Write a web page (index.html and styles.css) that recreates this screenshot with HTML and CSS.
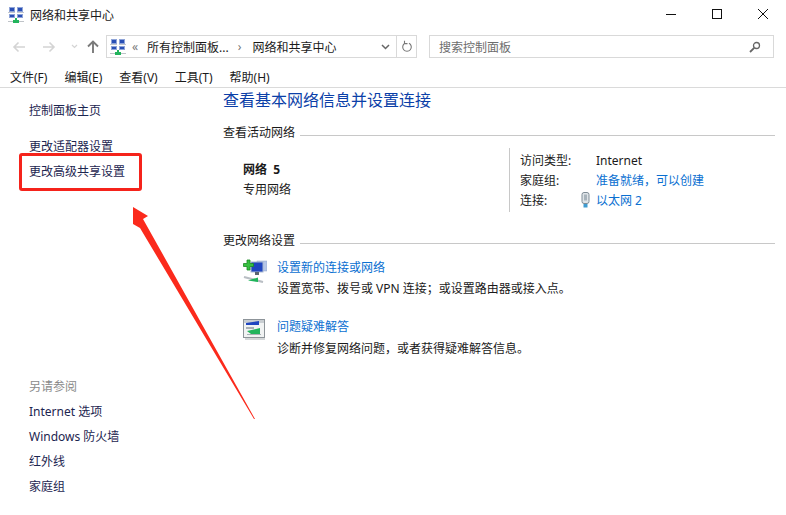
FILE: index.html
```html
<!DOCTYPE html>
<html lang="zh-CN">

<head>
    <meta charset="UTF-8">
    <title>网络和共享中心</title>
    <link rel="stylesheet" href="styles.css">
</head>

<body>
    <svg width="0" height="0" class="defs">
        <symbol id="net" viewBox="0 0 16 16">
            <rect x="1" y="0" width="6" height="5" fill="#8fa4d8" />
            <rect x="9" y="0" width="6" height="5" fill="#8fa4d8" />
            <rect x="2" y="1" width="4" height="3" fill="#2a50b5" />
            <rect x="10" y="1" width="4" height="3" fill="#2a50b5" />
            <rect x="1" y="7" width="6" height="4" fill="#8fa4d8" />
            <rect x="9" y="7" width="6" height="4" fill="#8fa4d8" />
            <rect x="2" y="8" width="4" height="2" fill="#2a50b5" />
            <rect x="10" y="8" width="4" height="2" fill="#2a50b5" />
            <rect x="0" y="5" width="7" height="1" fill="#c3c7cd" />
            <rect x="9" y="5" width="7" height="1" fill="#c3c7cd" />
            <rect x="0" y="14" width="16" height="1" fill="#bfc3c8" />
            <rect x="7" y="11" width="2" height="2" fill="#22b45c" />
            <rect x="5" y="13" width="6" height="3" fill="#22b45c" />
        </symbol>
    </svg>

    <div class="window">
        <div class="titlebar">
            <svg class="icon16"><use href="#net" /></svg>
            <span class="title">网络和共享中心</span>
            <div class="winbtns">
                <svg width="12" height="12" viewBox="0 0 12 12"><path d="M1 5.500h10" stroke="#111" fill="none" /></svg>
                <svg width="12" height="12" viewBox="0 0 12 12"><rect x="1.500" y="0.500" width="9" height="9" stroke="#111" fill="none" /></svg>
                <svg width="12" height="12" viewBox="0 0 12 12"><path d="M1 0l10 10M11 0l-10 10" stroke="#111" fill="none" /></svg>
            </div>
        </div>

        <div class="navbar">
            <div class="navbtns">
                <svg width="14" height="12" viewBox="0 0 14 12"><path d="M13 6H2M6.500 1.500L2 6l4.500 4.500" stroke="#d4d4d4" stroke-width="1.600" fill="none" /></svg>
                <svg width="14" height="12" viewBox="0 0 14 12"><path d="M1 6h11M7.500 1.500L12 6l-4.500 4.500" stroke="#d4d4d4" stroke-width="1.600" fill="none" /></svg>
                <svg width="7" height="5" viewBox="0 0 7 5"><path d="M1 1l2.500 2.500L6 1" stroke="#d4d4d4" stroke-width="1.200" fill="none" /></svg>
                <svg width="12" height="13" viewBox="0 0 12 13"><path d="M6 13V2M1 6.500L6 1.500l5 5" stroke="#7a7a7a" stroke-width="1.900" fill="none" /></svg>
            </div>
            <div class="address">
                <svg class="icon16"><use href="#net" /></svg>
                <span class="crumb-mark">«</span>
                <span>所有控制面板...</span>
                <span class="crumb-sep">›</span>
                <span>网络和共享中心</span>
                <svg class="addr-drop" width="9" height="6" viewBox="0 0 9 6"><path d="M1 1l3.500 3.500L8 1" stroke="#666" stroke-width="1.500" fill="none" /></svg>
                <div class="refresh">
                    <svg width="12" height="13" viewBox="0 0 12 13"><path d="M4 3.200A4.300 4.300 0 1 0 8 3.200M3.500 0.800V3.600H6.500" stroke="#777" stroke-width="1.100" fill="none" /></svg>
                </div>
            </div>
            <div class="search">
                <span>搜索控制面板</span>
                <svg width="12" height="12" viewBox="0 0 12 12"><circle cx="7.500" cy="4.500" r="3" stroke="#666" stroke-width="1.300" fill="none" /><path d="M5.200 6.800L1 11" stroke="#666" stroke-width="1.800" /></svg>
            </div>
        </div>

        <div class="menubar">
            <span>文件(F)</span>
            <span>编辑(E)</span>
            <span>查看(V)</span>
            <span>工具(T)</span>
            <span>帮助(H)</span>
        </div>

        <div class="content">
            <div class="sidebar">
                <a class="home">控制面板主页</a>
                <a class="first">更改适配器设置</a>
                <a>更改高级共享设置</a>
                <div class="seealso">另请参阅</div>
                <a>Internet 选项</a>
                <a>Windows 防火墙</a>
                <a>红外线</a>
                <a>家庭组</a>
            </div>

            <div class="main">
                <h1>查看基本网络信息并设置连接</h1>

                <div class="section-head"><span>查看活动网络</span><i></i></div>
                <div class="active-net">
                    <div class="net-name">
                        <b>网络&nbsp;&nbsp;5</b>
                        <span>专用网络</span>
                    </div>
                    <div class="net-info">
                        <div class="info-row"><span class="label">访问类型:</span><span>Internet</span></div>
                        <div class="info-row"><span class="label">家庭组:</span><a>准备就绪<span class="mid">，</span>可以创建</a></div>
                        <div class="info-row">
                            <span class="label">连接:</span>
                            <svg class="plug" width="9" height="16" viewBox="0 0 9 16">
                                <rect x="1" y="0.500" width="7" height="11" rx="2" fill="#dfe4e8" stroke="#7f8c96" />
                                <rect x="3" y="2.500" width="3" height="6" fill="#a9b4bc" />
                                <rect x="2.500" y="12" width="4" height="3.500" fill="#3f9bd0" />
                            </svg>
                            <a>以太网 2</a>
                        </div>
                    </div>
                </div>

                <div class="section-head second"><span>更改网络设置</span><i></i></div>

                <div class="task task-new">
                    <svg class="task-icon" width="24" height="24" viewBox="0 0 24 24">
                        <rect x="14" y="2" width="10" height="10" fill="#b5c6e8" stroke="#8ea3c8" stroke-width="0.500" />
                        <rect x="8" y="3" width="12" height="10" fill="#1f45c0" stroke="#a9b7d0" />
                        <rect x="12" y="13" width="4" height="3" fill="#5a6470" />
                        <path d="M4 1h3v3.500h3.500v3H7V11H4V7.500H0.500v-3H4z" fill="#38c040" stroke="#1a8a24" stroke-width="0.800" />
                        <path d="M1 18l19 5" stroke="#b9bec4" stroke-width="2.200" />
                        <path d="M5 21.500l10-3v4.500z" fill="#1fb45a" />
                    </svg>
                    <div>
                        <a>设置新的连接或网络</a>
                        <p>设置宽带、拨号或 VPN 连接<span class="mid">；</span>或设置路由器或接入点。</p>
                    </div>
                </div>

                <div class="task task-fix">
                    <svg class="task-icon" width="23" height="21" viewBox="0 0 23 21">
                        <rect x="0.500" y="0.500" width="21" height="18" fill="#f1f3f3" stroke="#8d9499" />
                        <rect x="1" y="1" width="20" height="3" fill="#c9ced2" />
                        <path d="M3 4l13-2v4L3 6z" fill="#1f45c0" />
                        <path d="M4 12l13-3v6H8z" fill="#22b45c" />
                        <path d="M3 8h8v2H3zM4 15h14v1H4z" fill="#a9b0b5" />
                        <rect x="2" y="19" width="20" height="2" fill="#d4d7d9" />
                    </svg>
                    <div>
                        <a>问题疑难解答</a>
                        <p>诊断并修复网络问题<span class="mid">，</span>或者获得疑难解答信息。</p>
                    </div>
                </div>
            </div>
        </div>
    </div>

    <!-- red marks drawn over the screenshot -->
    <div class="redbox"></div>
    <svg class="redarrow" width="786" height="515" viewBox="0 0 786 515">
        <path d="M133 207L148 216L143 219L255 419L254 419L140 228L133 224z" fill="#fb2a1c" />
    </svg>
</body>

</html>
```

FILE: styles.css
```css
* {
    padding: 0;
    margin: 0;
    box-sizing: border-box;
}

body {
    width: 786px;
    height: 515px;
    overflow: hidden;
    background: #fff;
    color: #1a1a1a;
    font-family: "Noto Sans", "Noto Sans CJK SC", sans-serif;
    font-size: 12px;
}

.defs {
    display: block;
}

.window {
    display: flex;
    flex-direction: column;
    height: 515px;
}

.icon16 {
    width: 16px;
    height: 16px;
    flex: none;
}

/* windows punctuation sits in the middle of the cell */
.mid {
    font-family: "Noto Sans CJK TC", sans-serif;
    line-height: 0;
}

/* title bar */
.titlebar {
    display: flex;
    align-items: center;
    height: 30px;
    padding-left: 8px;
}

.title {
    margin-left: 6px;
}

.winbtns {
    display: flex;
    gap: 34px;
    margin-left: auto;
    padding-right: 17px;
}

/* back / forward + address + search */
.navbar {
    display: flex;
    align-items: center;
    height: 23px;
    margin-top: 5px;
}

.navbtns {
    display: flex;
    align-items: center;
    width: 106px;
    padding-left: 12px;
}

.navbtns svg:nth-child(2) {
    margin-left: 16px;
}

.navbtns svg:nth-child(3) {
    margin-left: 15px;
}

.navbtns svg:nth-child(4) {
    margin-left: 9px;
}

.address {
    display: flex;
    align-items: center;
    width: 311px;
    height: 23px;
    padding-left: 3px;
    border: 1px solid #d9d9d9;
}

.crumb-mark {
    margin: 0 9px 0 6px;
    color: #777;
}

.crumb-sep {
    margin: 0 11px 0 9px;
    color: #777;
}

.addr-drop {
    margin-left: auto;
    margin-right: 6px;
}

.refresh {
    display: flex;
    align-items: center;
    justify-content: center;
    width: 20px;
    height: 21px;
    border-left: 1px solid #d9d9d9;
}

.search {
    display: flex;
    align-items: center;
    justify-content: space-between;
    width: 345px;
    height: 23px;
    margin-left: 12px;
    padding: 0 12px 0 9px;
    border: 1px solid #d9d9d9;
    color: #6d6d6d;
}

/* menu */
.menubar {
    display: flex;
    gap: 17px;
    align-items: center;
    height: 30px;
    padding: 8px 0 0 10px;
    border-bottom: 1px solid #dadada;
    flex: none;
}

.content {
    display: flex;
    flex: 1;
}

/* left column */
.sidebar {
    display: flex;
    flex-direction: column;
    width: 223px;
    padding: 10px 0 0 29px;
    line-height: 25px;
}

.sidebar a {
    color: #1c2550;
}

.sidebar .first {
    margin-top: 11px;
}

.seealso {
    margin-top: 190px;
    color: #8a8a8a;
}

/* right column */
.main {
    flex: 1;
    padding-right: 11px;
}

h1 {
    font-size: 16px;
    font-weight: normal;
    line-height: 24px;
    color: #0b3fa8;
}

.section-head {
    display: flex;
    align-items: center;
    gap: 5px;
    height: 24px;
    margin-top: 8px;
}

.section-head i {
    flex: 1;
    height: 1px;
    margin-top: 6px;
    background: #c8c8c8;
}

.section-head.second {
    margin-top: 16px;
}

.active-net {
    display: flex;
    margin-top: 4px;
}

.net-name {
    display: flex;
    flex-direction: column;
    width: 286px;
    height: 64px;
    padding: 12px 0 0 20px;
    line-height: 20px;
}

.net-info {
    flex: 1;
    height: 64px;
    padding: 2px 0 0 10px;
    border-left: 1px solid #c8c8c8;
}

.info-row {
    display: flex;
    align-items: center;
    height: 20px;
}

.label {
    width: 76px;
    flex: none;
}

.plug {
    margin-left: -15px;
    margin-right: 6px;
}

a {
    color: #0a6fd1;
}

.task {
    display: flex;
    padding-left: 20px;
    line-height: 21px;
}

.task-icon {
    flex: none;
    margin-top: 2px;
    margin-right: 10px;
}

.task-new {
    margin-top: 5px;
}

.task-fix {
    margin-top: 17px;
}

.task-fix .task-icon {
    margin-top: 3px;
    margin-right: 11px;
}

.task-fix p {
    margin-top: 1px;
}

/* annotation */
.redbox {
    position: absolute;
    left: 19px;
    top: 153px;
    width: 123px;
    height: 38px;
    border: 3px solid #f5231b;
    border-radius: 3px;
}

.redarrow {
    position: absolute;
    left: 0;
    top: 0;
}
```
